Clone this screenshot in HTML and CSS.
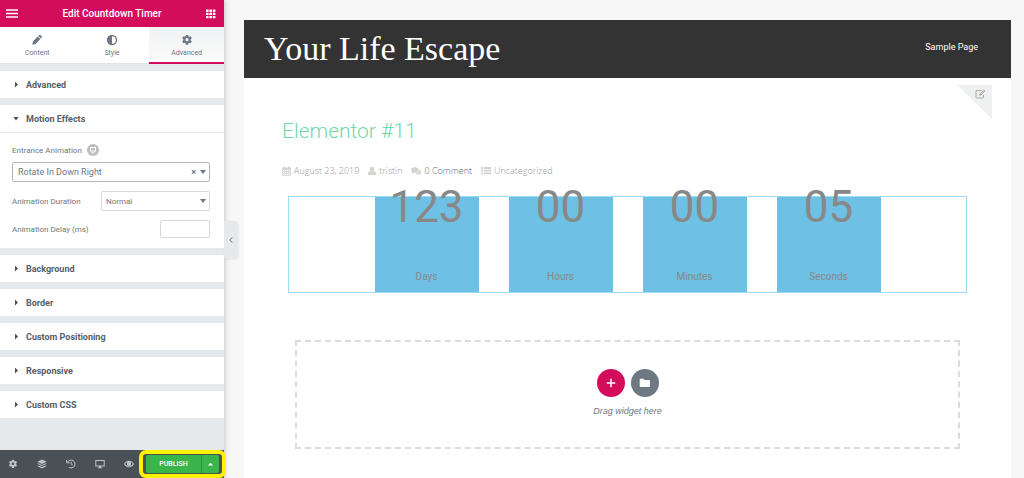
FILE: index.html
```html
<!DOCTYPE html>
<html lang="en">
<head>
  <meta charset="UTF-8" />
  <meta name="viewport" content="width=device-width, initial-scale=1" />
  <title>Elementor #11</title>
  <link rel="stylesheet" href="styles.css">
</head>
<body>
  <div class="editor">
    <aside class="panel">
      <header class="panel-header">
        <button class="icon-btn" aria-label="Menu">
          <svg width="12" height="10" viewBox="0 0 12 10"><path d="M0 1h12M0 4.5h12M0 8h12" stroke="#fff" stroke-width="1.6"/></svg>
        </button>
        <h1 class="panel-title">Edit Countdown Timer</h1>
        <button class="icon-btn" aria-label="Widgets">
          <svg width="10" height="10" viewBox="0 0 10 10" fill="#fff"><path d="M0 .5h2.6v2.4H0zM3.4.5H6v2.4H3.4zM6.8.5h2.6v2.4H6.8zM0 3.7h2.6v2.4H0zM3.4 3.7H6v2.4H3.4zM6.8 3.7h2.6v2.4H6.8zM0 6.9h2.6v2.4H0zM3.4 6.9H6v2.4H3.4zM6.8 6.9h2.6v2.4H6.8z"/></svg>
        </button>
      </header>

      <nav class="tabs">
        <button class="tab">
          <svg width="12" height="12" viewBox="0 0 12 12"><path d="M1.2 10.8l.8-3.4 4.7-4.9 2.6 2.6-4.7 4.9z M7.3 1.9l.9-.9q.6-.5 1.200 0l1.400 1.400q.5.600 0 1.200l-.9.9z"/></svg>
          <span>Content</span>
        </button>
        <button class="tab">
          <svg width="12" height="12" viewBox="0 0 12 12"><path fill-rule="evenodd" d="M6 .8a5.2 5.2 0 1 1 0 10.4A5.2 5.2 0 0 1 6 .8zM6 2.2v7.6a3.8 3.8 0 0 0 0-7.6z"/></svg>
          <span>Style</span>
        </button>
        <button class="tab active">
          <svg width="12" height="12" viewBox="0 0 12 12"><use href="#gear"/></svg>
          <span>Advanced</span>
        </button>
      </nav>

      <div class="sections">
        <section class="section">
          <button class="section-head"><i class="caret"></i>Advanced</button>
        </section>

        <section class="section">
          <button class="section-head"><i class="caret open"></i>Motion Effects</button>
          <div class="controls">
            <div class="control-label">
              <label for="entrance">Entrance Animation</label>
              <span class="device">
                <svg width="12" height="12" viewBox="0 0 12 12" fill="none" stroke="#fff"><rect x="3.5" y="3.5" width="5" height="3.5"/><path d="M4.5 8.8h3"/></svg>
              </span>
            </div>
            <div class="select wide">
              <select id="entrance"><option>Rotate In Down Right</option></select>
              <button class="clear" aria-label="Clear">×</button>
            </div>
            <div class="control">
              <label for="duration">Animation Duration</label>
              <div class="select">
                <select id="duration"><option>Normal</option></select>
              </div>
            </div>
            <div class="control">
              <label for="delay">Animation Delay (ms)</label>
              <input id="delay" class="number" type="text">
            </div>
          </div>
        </section>

        <section class="section"><button class="section-head"><i class="caret"></i>Background</button></section>
        <section class="section"><button class="section-head"><i class="caret"></i>Border</button></section>
        <section class="section"><button class="section-head"><i class="caret"></i>Custom Positioning</button></section>
        <section class="section"><button class="section-head"><i class="caret"></i>Responsive</button></section>
        <section class="section"><button class="section-head"><i class="caret"></i>Custom CSS</button></section>
      </div>

      <footer class="panel-footer">
        <div class="tools">
          <button class="tool" aria-label="Settings">
            <svg width="10" height="10" viewBox="0 0 12 12"><path id="gear" fill-rule="evenodd" d="M4.9.9h2.2l.3 1.4.9.5 1.4-.5 1.1 1.9-1.1 1v1.1l1.1 1-1.1 1.9-1.4-.5-.9.5-.3 1.5H4.9l-.3-1.5-.9-.5-1.4.5-1.1-1.9 1.1-1V5.2l-1.1-1 1.1-1.9 1.4.5.9-.5zM6 4.1a1.6 1.6 0 1 0 0 3.2 1.6 1.6 0 0 0 0-3.2z"/></svg>
          </button>
          <button class="tool" aria-label="Navigator">
            <svg width="10" height="10" viewBox="0 0 10 10"><path d="M5 .5l4.7 2.2L5 5 .3 2.7zM1.5 4.2L5 5.9l3.5-1.7 1.2.6L5 7.1.3 4.8zM1.500 6.400L5 8.1l3.500-1.700 1.200.6L5 9.400.3 7z"/></svg>
          </button>
          <button class="tool" aria-label="History">
            <svg width="10" height="10" viewBox="0 0 10 10" fill="none" stroke="#bfc4ca"><path d="M1.6 3.3A3.9 3.9 0 1 1 3 8.3"/><path d="M.7 1v2.8h2.900M5.2 2.9v2.300l1.500.9"/></svg>
          </button>
          <button class="tool" aria-label="Responsive mode">
            <svg width="10" height="10" viewBox="0 0 10 10"><path fill-rule="evenodd" d="M.3 1h9.4v6.6H6v.8h1.3v.9H2.7v-.9H4v-.8H.3zM1.3 2v4.5h7.4V2z"/></svg>
          </button>
          <button class="tool" aria-label="Preview">
            <svg width="10" height="10" viewBox="0 0 10 10"><path fill-rule="evenodd" d="M0 5q2-3.3 5-3.3T10 5Q8 8.3 5 8.3T0 5zM1.2 5Q2.8 7.4 5 7.4T8.8 5Q8 3.7 6.7 3 8 7 5 7.1 2 7 3.3 3 2 3.7 1.2 5z"/><circle cx="5" cy="4.7" r="1.7"/></svg>
          </button>
        </div>
        <div class="publish">
          <button class="publish-btn">PUBLISH</button>
          <button class="publish-more" aria-label="Save options"><i class="caret up"></i></button>
          <span class="highlight"></span>
        </div>
      </footer>

      <button class="collapse" aria-label="Collapse panel">
        <svg width="6" height="8" viewBox="0 0 6 8" fill="none" stroke="#6d7882"><path d="M4.2 1.5L1.8 4l2.4 2.5"/></svg>
      </button>
    </aside>

    <main class="preview">
      <header class="site-header">
        <a class="site-title" href="#">Your Life Escape</a>
        <a class="site-link" href="#">Sample Page</a>
      </header>

      <article class="page">
        <a class="edit-corner" href="#" aria-label="Edit">
          <svg width="11" height="10" viewBox="0 0 11 10" fill="none" stroke="#a9a9a0"><path d="M6.5 1.5H2q-1 0-1 1V8q0 1 1 1h5.5q1 0 1-1V6"/><path d="M4.5 6.3l.5-1.5L9 .9l1 1-4 4z" fill="#d5d7d0"/></svg>
        </a>

        <h2 class="post-title">Elementor #11</h2>

        <div class="meta">
          <span class="meta-item">
            <svg width="9" height="10" viewBox="0 0 9 10"><path fill-rule="evenodd" d="M0 1.5h1.5V.3h1.3v1.2h3.4V.3h1.3v1.2H9v8.2H0zM.8 3.7v1.5h1.5V3.7zM3 3.7v1.5h1.3V3.7zM5 3.7v1.5h1.3V3.7zM7 3.7v1.5h1.2V3.7zM.8 5.9v1.2h1.5V5.9zM3 5.9v1.2h1.3V5.9zM5 5.9v1.2h1.3V5.9zM7 5.9v1.2h1.2V5.9zM.8 7.8V9h1.5V7.8zM3 7.8V9h1.3V7.8zM5 7.8V9h1.3V7.8zM7 7.8V9h1.2V7.8z"/></svg>
            August 23, 2019
          </span>
          <span class="meta-item">
            <svg width="8" height="10" viewBox="0 0 8 10"><circle cx="4" cy="3.2" r="2.3"/><path d="M0 9V7.5Q.3 5.2 1.9 5.1q2.1 1.5 4.2 0Q7.7 5.2 8 7.5V9z"/></svg>
            tristin
          </span>
          <a class="meta-item dark" href="#">
            <svg width="10" height="10" viewBox="0 0 10 10"><ellipse cx="3.8" cy="4" rx="3.8" ry="2.8"/><path d="M1.5 5.5L1 8l2.5-1.5z"/><path d="M8.3 3.5Q10 4.5 10 6q0 1-.8 1.6l.6 1.4-2-.8Q5.4 8.7 4.2 7.4 8 7.2 8.3 3.5z"/></svg>
            0 Comment
          </a>
          <span class="meta-item">
            <svg width="10" height="10" viewBox="0 0 10 10"><path d="M0 1h2.2v1.9H0zM3 1h7v1.9H3zM0 3.7h2.2v1.9H0zM3 3.7h7v1.9H3zM0 6.4h2.2v1.9H0zM3 6.4h7v1.9H3z"/></svg>
            Uncategorized
          </span>
        </div>

        <div class="countdown">
          <div class="unit"><span class="digits">123</span><span class="unit-label">Days</span></div>
          <div class="unit"><span class="digits">00</span><span class="unit-label">Hours</span></div>
          <div class="unit"><span class="digits">00</span><span class="unit-label">Minutes</span></div>
          <div class="unit"><span class="digits">05</span><span class="unit-label">Seconds</span></div>
        </div>

        <div class="drop-area">
          <div class="drop-buttons">
            <button class="round add" aria-label="Add section">
              <svg width="10" height="10" viewBox="0 0 10 10" stroke="#fff" stroke-width="1.5"><path d="M5 .8v8.4M.8 5h8.4"/></svg>
            </button>
            <button class="round" aria-label="Add template">
              <svg width="12" height="10" viewBox="0 0 12 10" fill="#fff"><path d="M1.5.8h3l1 1.2h4.7q.8 0 .8.8v5.4q0 .8-.8.8H1.5q-.8 0-.8-.8V1.6q0-.8.8-.8z"/></svg>
            </button>
          </div>
          <p class="drop-text">Drag widget here</p>
        </div>
      </article>
    </main>
  </div>
</body>
</html>
```
FILE: styles.css
```css
* {
  box-sizing: border-box;
}

body {
  margin: 0;
  font-family: Roboto, Arial, sans-serif;
  color: #6d7882;
  background-color: #f7f7f7;
}

button {
  font-family: inherit;
  color: inherit;
  background: none;
  border: none;
  padding: 0;
  cursor: pointer;
}

a {
  text-decoration: none;
}

svg {
  display: block;
  flex: none;
}

.editor {
  display: flex;
  min-height: 100vh;
}

/* left panel */
.panel {
  position: relative;
  flex: 0 0 224px;
  display: flex;
  flex-direction: column;
  background-color: #e6e9ec;
  box-shadow: 1px 0 5px rgba(0, 0, 0, 0.2);
}

.panel-header {
  display: flex;
  align-items: center;
  justify-content: space-between;
  height: 27px;
  padding: 0 8px 0 6px;
  background-color: #d30c5c;
}

.panel-title {
  margin: 0;
  font-size: 10px;
  font-weight: 500;
  line-height: 24px;
  color: #fff;
}

.tabs {
  display: grid;
  grid-template-columns: repeat(3, 1fr);
  height: 37px;
  background-color: #fff;
}

.tab {
  display: flex;
  flex-direction: column;
  align-items: center;
  gap: 2px;
  padding-top: 7px;
  font-size: 7px;
  line-height: 10px;
  fill: #6d7882;
  border-bottom: 1px solid #e0e3e6;
}

.tab.active {
  background-image: linear-gradient(#f1f2f3, #fafafa);
  border-bottom: 2px solid #d30c5c;
}

.sections {
  flex: 1;
  display: flex;
  flex-direction: column;
  gap: 7px;
  padding: 7px 0;
}

.section {
  background-color: #fff;
}

.section-head {
  display: flex;
  align-items: center;
  gap: 7px;
  width: 100%;
  height: 27px;
  padding-left: 15px;
  font-size: 9px;
  font-weight: 700;
  color: #556068;
}

.caret {
  width: 4px;
  height: 6px;
  background-color: #495157;
  clip-path: polygon(0 0, 75% 50%, 0 100%);
}

.caret.open {
  width: 6px;
  height: 4px;
  margin-left: -2px;
  clip-path: polygon(0 0, 100% 0, 50% 100%);
}

.caret.up {
  width: 5px;
  height: 3px;
  background-color: #fff;
  clip-path: polygon(50% 0, 100% 100%, 0 100%);
}

.controls {
  padding: 10px 14px 10px 12px;
  border-top: 1px solid #e6e9ec;
  font-size: 8px;
}

.control-label {
  display: flex;
  align-items: center;
  gap: 5px;
  height: 14px;
  margin-bottom: 5px;
}

.device {
  border-radius: 50%;
  background-color: #bdbdc2;
}

.control {
  display: flex;
  align-items: center;
  justify-content: space-between;
  margin-top: 9px;
}

.select {
  position: relative;
  width: 109px;
}

.select.wide {
  width: 100%;
}

.select select {
  display: block;
  width: 100%;
  height: 20px;
  padding: 0 4px;
  appearance: none;
  font-family: inherit;
  font-size: 8px;
  color: #6d7882;
  background-color: #fff;
  border: 1px solid #d5d8dc;
  border-radius: 2px;
}

.select.wide select {
  padding: 0 5px;
  font-size: 9px;
  border-color: #b3b3bb;
}

.select::after {
  content: "";
  position: absolute;
  top: 8px;
  right: 4px;
  border: 3px solid transparent;
  border-top: 4px solid #6d7882;
  border-bottom: 0;
  pointer-events: none;
}

.clear {
  position: absolute;
  top: 5px;
  right: 14px;
  font-size: 9px;
  font-weight: 700;
  line-height: 10px;
}

.number {
  width: 50px;
  height: 18px;
  border: 1px solid #d5d8dc;
  border-radius: 2px;
}

.panel-footer {
  display: flex;
  align-items: center;
  justify-content: space-between;
  height: 28px;
  padding: 0 5px 0 8px;
  background-color: #495157;
}

.tools {
  display: flex;
  gap: 19px;
}

.tool {
  fill: #bfc4ca;
}

.publish {
  position: relative;
  display: flex;
  width: 73px;
  height: 18px;
  color: #fff;
  background-color: #39b54a;
  border-radius: 2px;
}

.publish-btn {
  flex: 1;
  font-size: 7px;
  font-weight: 500;
}

.publish-more {
  display: grid;
  place-items: center;
  width: 18px;
  border-left: 1px solid #2c8f3a;
}

.highlight {
  position: absolute;
  inset: -5px -7px;
  border: 4px solid #fff200;
  border-radius: 7px;
  pointer-events: none;
}

.collapse {
  position: absolute;
  top: 221px;
  left: 100%;
  display: grid;
  place-items: center;
  width: 13px;
  height: 37px;
  background-color: #e6e9ec;
  border-radius: 0 3px 3px 0;
  box-shadow: 1px 1px 3px rgba(0, 0, 0, 0.1);
}

/* page preview */
.preview {
  flex: 1;
  display: flex;
  flex-direction: column;
  min-width: 0;
  padding: 20px 13px 0 20px;
}

.site-header {
  display: flex;
  align-items: center;
  justify-content: space-between;
  height: 58px;
  padding: 0 33px 0 20px;
  background-color: #333;
}

.site-title {
  font-family: "Liberation Serif", "Times New Roman", serif;
  font-size: 34px;
  color: #fff;
}

.site-link {
  font-size: 9px;
  line-height: 14px;
  padding-bottom: 4px;
  color: #fff;
}

.page {
  position: relative;
  flex: 1;
  padding: 36px 44px 20px;
  background-color: #fff;
}

.edit-corner {
  position: absolute;
  top: 7px;
  right: 19px;
  width: 35px;
  height: 34px;
  padding: 4px 0 0 18px;
  background-color: #eef0f2;
  clip-path: polygon(0 0, 100% 0, 100% 100%);
}

.post-title {
  margin: 0 -6px;
  font-size: 21px;
  font-weight: 300;
  line-height: 34px;
  color: #6fd9ae;
}

.meta {
  display: flex;
  gap: 9px;
  margin: 16px -6px;
  font-family: "Open Sans", sans-serif;
  font-size: 9px;
  font-weight: 300;
  line-height: 14px;
  color: #999;
}

.meta-item {
  display: flex;
  align-items: center;
  gap: 3px;
  color: inherit;
  fill: #d2d2d2;
}

.meta-item.dark {
  color: #666;
}

.countdown {
  display: flex;
  justify-content: center;
  gap: 30px;
  margin-top: 18px;
  border: 1px solid #9bdcf4;
}

.unit {
  display: flex;
  flex-direction: column;
  align-items: center;
  justify-content: space-between;
  width: 104px;
  height: 95px;
  padding-bottom: 8px;
  background-color: #6ec1e4;
  color: #888;
}

.digits {
  font-size: 44px;
  line-height: 20px;
}

.unit-label {
  font-size: 10px;
  line-height: 14px;
}

.drop-area {
  display: flex;
  flex-direction: column;
  align-items: center;
  margin: 47px 7px 0;
  padding: 27px 0 29px;
  border: 2px dashed #dcdcdf;
}

.drop-buttons {
  display: flex;
  gap: 6px;
}

.round {
  display: grid;
  place-items: center;
  width: 28px;
  height: 28px;
  border-radius: 50%;
  background-color: #6d7882;
}

.round.add {
  background-color: #d30c5c;
}

.drop-text {
  margin: 7px 0 0;
  font-family: "Liberation Sans", Arial, sans-serif;
  font-size: 9px;
  font-style: italic;
  line-height: 14px;
}
```
